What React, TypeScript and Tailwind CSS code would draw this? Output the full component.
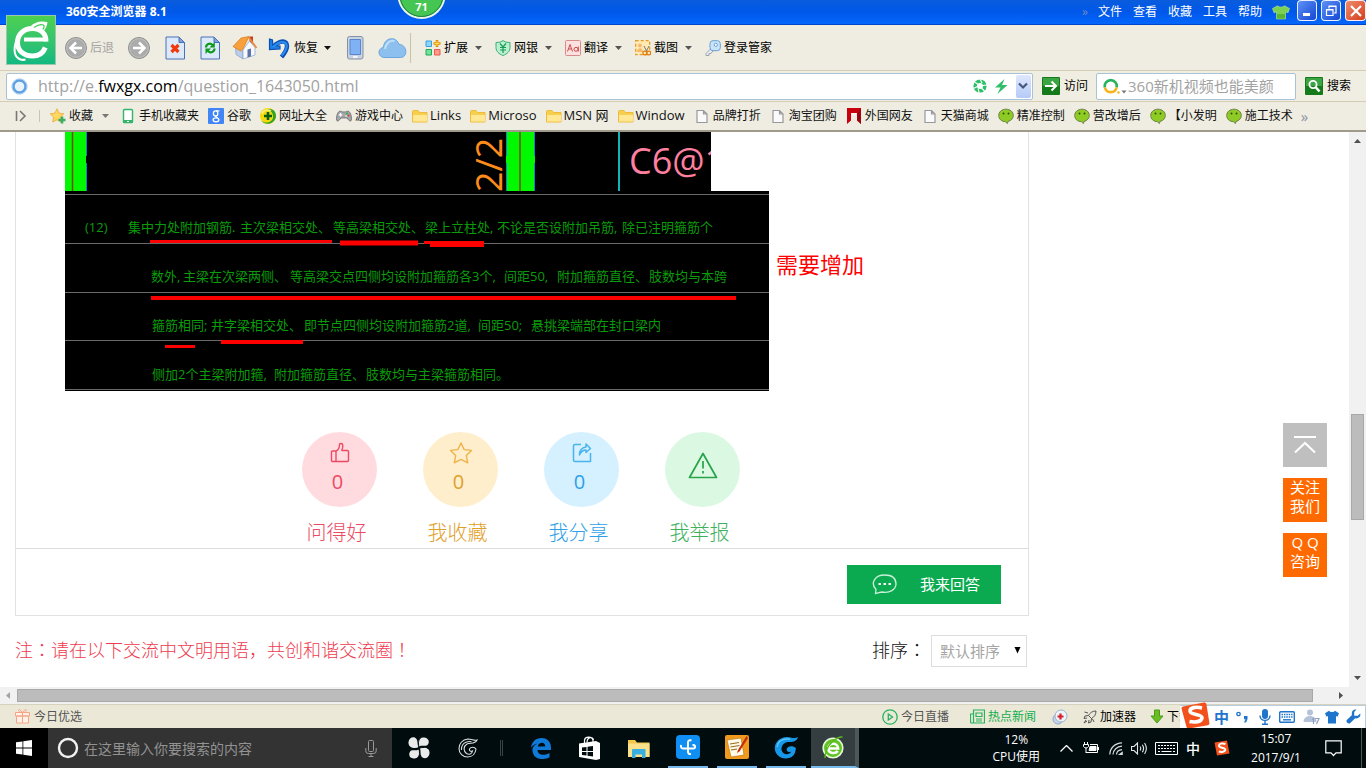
import React from 'react';

type IconName =
  | 'phone'
  | 'google'
  | 'plus'
  | 'pad'
  | 'folder'
  | 'page'
  | 'ribbon'
  | 'wechat';

const bookmarks: { title: string; icon: IconName }[] = [
  { title: '手机收藏夹', icon: 'phone' },
  { title: '谷歌', icon: 'google' },
  { title: '网址大全', icon: 'plus' },
  { title: '游戏中心', icon: 'pad' },
  { title: 'Links', icon: 'folder' },
  { title: 'Microso', icon: 'folder' },
  { title: 'MSN 网', icon: 'folder' },
  { title: 'Window', icon: 'folder' },
  { title: '品牌打折', icon: 'page' },
  { title: '淘宝团购', icon: 'page' },
  { title: '外国网友', icon: 'ribbon' },
  { title: '天猫商城', icon: 'page' },
  { title: '精准控制', icon: 'wechat' },
  { title: '营改增后', icon: 'wechat' },
  { title: '【小发明', icon: 'wechat' },
  { title: '施工技术', icon: 'wechat' },
];

function BookmarkIcon({ name }: { name: IconName }) {
  return (
    <svg className="size-4 shrink-0" viewBox="0 0 16 16" aria-hidden="true">
      {name === 'phone' && (
        <>
          <rect x="3.5" y="1.5" width="9" height="13" rx="1" fill="#fff" stroke="#35b46b" strokeWidth="1.4" />
          <path d="M3 12h10v3H3z" fill="#35b46b" />
          <path d="M7 13.5h2" stroke="#fff" />
        </>
      )}
      {name === 'google' && (
        <>
          <rect width="16" height="16" rx="1" fill="#4285f4" />
          <ellipse cx="7.6" cy="5.4" rx="2.2" ry="2.5" fill="none" stroke="#fff" strokeWidth="1.3" />
          <ellipse cx="8" cy="11.8" rx="2.9" ry="2" fill="none" stroke="#fff" strokeWidth="1.3" />
          <path d="M8 2.8h3.4M7.2 8l2.4 2" stroke="#fff" strokeWidth="1.2" />
        </>
      )}
      {name === 'plus' && (
        <>
          <circle cx="8" cy="8" r="8" fill="#f6d90d" />
          <path d="M1 12.5C5 16 12 15 13 9.5c.6-4-2-7-6-8C13-.5 16 4 16 8c0 7-10 11-15 4.5z" fill="#2aa52a" />
          <path d="M2 6c1-4 6-5 9-3" fill="none" stroke="#fff27a" strokeWidth="1.5" />
          <path d="M8 4v8M4 8h8" stroke="#0a5f12" strokeWidth="2.6" />
        </>
      )}
      {name === 'pad' && (
        <>
          <path d="M3 3.5c2-1 3 .5 5 .5s3-1.5 5-.5c2 1.2 3 7 2.3 8.8-.6 1.4-2 1-4.3-2.3H5C2.7 13.3 1.3 13.7.7 12.3 0 10.5 1 4.7 3 3.5z" fill="#a3a6a8" stroke="#5c5f61" strokeWidth=".7" />
          <path d="M4.5 5v3.6M2.7 6.8h3.6" stroke="#fff" strokeWidth="1.3" />
          <circle cx="11" cy="5.5" r="1" fill="#2fae3c" />
          <circle cx="12.6" cy="7.4" r="1" fill="#e0392b" />
          <circle cx="10" cy="8" r=".8" fill="#fff" />
        </>
      )}
      {name === 'folder' && (
        <>
          <path d="M.5 14V3.5A1 1 0 0 1 1.5 2.5H6l1.5 2H15V14z" fill="#f7cf4e" stroke="#eebb3a" />
          <path d="M1 7h14v6.5H1z" fill="#ffe793" />
        </>
      )}
      {name === 'page' && (
        <path d="M3 2.5h6.5l3.5 3.5v8.5H3zM9.5 2.5V6H13" fill="#fafafa" stroke="#98989c" strokeWidth="1.2" />
      )}
      {name === 'ribbon' && (
        <>
          <path d="M1 0h14v16l-4-3.5V6.5H5v6L1 16z" fill="#c8000e" />
          <path d="M5 6.5c2 1.5 4 1.5 6 0V5H5z" fill="#f7f7ef" />
          <path d="M11 12V6l4-6v16z" fill="#9c0410" />
        </>
      )}
      {name === 'wechat' && (
        <>
          <path d="M8 1.2c4.2 0 7.3 2.8 7.3 6.2 0 3-2.2 5.3-5.3 6l-.6 2.2-2-1.9C3.4 13.5.7 10.9.7 7.4.7 4 3.8 1.2 8 1.2z" fill="#8fcb25" stroke="#6f7f4a" strokeWidth="1" />
          <circle cx="5.5" cy="5.5" r="1" fill="#2f5203" />
          <circle cx="10.5" cy="5.5" r="1" fill="#2f5203" />
        </>
      )}
    </svg>
  );
}

function Caret({ color = '#555' }: { color?: string }) {
  return (
    <svg className="shrink-0" width="7" height="4" viewBox="0 0 7 4" aria-hidden="true">
      <path d="M0 0h7L3.5 4z" fill={color} />
    </svg>
  );
}

function TitleBar() {
  return (
    <header className="relative flex h-[25px] items-start border-b border-[#0046c8] bg-linear-to-b from-[#0a5cdc] via-[#0058ea] to-[#0466fc] text-white">
      <h1 className="mt-1 ml-[66px] text-[12px] leading-4 font-bold">360安全浏览器 8.1</h1>
      <div className="absolute top-[15px] left-[6px] z-10 size-[50px] border border-[#9bc8a8] bg-linear-to-b from-[#4cd04f] to-[#10b981]">
        <svg className="size-12" viewBox="0 0 48 48" fill="none" stroke="#fff" aria-hidden="true">
          <path d="M17 23.5h22" strokeWidth="4" />
          <path d="M38.8 25.5C39.5 18 34 12.5 25.5 12.5c-8.5 0-15 5.5-15 14s6.5 13.5 15 13.5c5.5 0 10.5-2.5 12.8-8.5" strokeWidth="5" />
          <path d="M23 11c4-4.5 10-6.5 17.5-4.8-.5 3.5-1.5 6-4 9-2-2.2-4.5-3.5-7.5-4z" fill="#fff" stroke="none" />
          <path d="M9.5 24C6.5 33 7 41 13 43.3c2 .8 4 .7 5.5.2" strokeWidth="2.2" />
          <path d="M27 11.5c3.5-2.5 7-3.3 9.5-2.5 1 1.2.5 3-.5 4.5" stroke="#45cb57" strokeWidth="1.2" />
        </svg>
      </div>
      <div className="absolute top-0 left-[398px] z-10 h-[20px] w-[47px]">
        <svg className="absolute inset-0" width="47" height="20" viewBox="0 0 47 20" aria-hidden="true">
          <circle cx="23.5" cy="-5" r="23" fill="#45c552" stroke="#e8f3e6" strokeWidth="2" />
          <circle cx="23.5" cy="-5" r="21.5" fill="none" stroke="#177d45" />
        </svg>
        <span className="relative block text-center text-[11px] leading-[14px] font-bold">71</span>
      </div>
      <nav className="mt-1 ml-auto flex text-[12px] leading-4">
        <span className="mr-2.5 text-[#6f8cc0]">»</span>
        <div className="flex gap-[11px]">
          {['文件', '查看', '收藏', '工具', '帮助'].map((item) => (
            <button key={item} className="whitespace-nowrap">{item}</button>
          ))}
        </div>
      </nav>
      <button className="mt-[5px] ml-[10px]" aria-label="皮肤">
        <svg width="18" height="15" viewBox="0 0 18 15">
          <path d="M5.5.8C7 2.6 11 2.6 12.5.8L17.5 3.5 16 7.8l-2.5-1V14h-9V6.8L2 7.8.5 3.5z" fill="#7bd152" stroke="#b4e89a" strokeWidth=".6" />
          <path d="M5 9h8v4.6H5z" fill="#57b534" />
        </svg>
      </button>
      <div className="ml-[7px] flex gap-[4px]">
        <button className="flex h-[21px] w-[20px] items-center justify-center rounded-sm border border-white/90 bg-linear-to-br from-[#5f90f6] to-[#1545d2]" aria-label="最小化">
          <svg width="14" height="14" viewBox="0 0 14 14"><path d="M3 10.5h7" stroke="#fff" strokeWidth="3" /></svg>
        </button>
        <button className="flex h-[21px] w-[20px] items-center justify-center rounded-sm border border-white/90 bg-linear-to-br from-[#5f90f6] to-[#1545d2]" aria-label="还原">
          <svg width="14" height="14" viewBox="0 0 14 14" fill="none" stroke="#fff">
            <path d="M5 4.5V2.5h7V9h-2M4.5 2h8" strokeWidth="1.2" />
            <path d="M2.5 6h6.5v5.5H2.5zM2 5.5h7.5" strokeWidth="1.2" />
          </svg>
        </button>
        <button className="flex h-[21px] w-[21px] items-center justify-center rounded-sm border border-white/90 bg-linear-to-br from-[#ef8a6c] to-[#d43a12]" aria-label="关闭">
          <svg width="14" height="14" viewBox="0 0 14 14"><path d="M2 2l10 10M12 2L2 12" stroke="#fff" strokeWidth="2.2" /></svg>
        </button>
      </div>
    </header>
  );
}

function ArrowCircle({ flip }: { flip?: boolean }) {
  return (
    <svg width="24" height="24" viewBox="0 0 24 24" className={flip ? 'rotate-180' : ''} aria-hidden="true">
      <circle cx="12" cy="12" r="10.5" fill="#ababab" stroke="#8d8d8d" />
      <circle cx="12" cy="12" r="9.4" fill="none" stroke="#c5c5c5" strokeWidth=".8" />
      <path d="M18 12H7M12 6.5L6.5 12l5.5 5.5" fill="none" stroke="#fff" strokeWidth="2.5" />
    </svg>
  );
}

const tools = [
  {
    title: '扩展',
    icon: (
      <>
        <path d="M1 1h5.5v5.5H1z" fill="#8cd6fb" stroke="#3a9fe0" />
        <path d="M1 9.5h5.5V15H1z" fill="#6fe39a" stroke="#1faa52" />
        <path d="M9.5 9.5H15V15H9.5z" fill="#ff9a8c" stroke="#e85a4a" />
        <path d="M12 0v7M8.5 3.5h7" stroke="#e08a00" strokeWidth="2.6" />
        <path d="M12 1v5M9.5 3.5h5" stroke="#ffdf5a" />
      </>
    ),
  },
  {
    title: '网银',
    icon: (
      <>
        <path d="M8 .6l3 1.6 4 .3v5c0 4-3 6.5-7 8-4-1.5-7-4-7-8v-5l4-.3z" fill="#b9f0cf" stroke="#3fae74" />
        <path d="M5 3.5l3 3.5 3-3.5M8 7v6M5 7.5h6M5 10h6" fill="none" stroke="#1b9a58" strokeWidth="1.2" />
      </>
    ),
  },
  {
    title: '翻译',
    icon: (
      <>
        <rect x=".5" y=".5" width="15" height="15" rx="1" fill="#fde0e0" stroke="#d98b8b" />
        <path d="M2.5 11.5L5 4.5l2.5 7M3.5 9h3" fill="none" stroke="#cc4a4a" />
        <circle cx="11" cy="9.3" r="2" fill="none" stroke="#cc4a4a" />
        <path d="M13.3 6.5v5" stroke="#cc4a4a" />
      </>
    ),
  },
  {
    title: '截图',
    icon: (
      <>
        <rect x=".7" y=".7" width="14" height="14" fill="#ffe9b5" stroke="#e89b22" strokeWidth="1.3" strokeDasharray="3 2" />
        <circle cx="5" cy="5.5" r="2" fill="#f7b96a" />
        <path d="M2 12c0-5 6-5 6 0z" fill="#f7b96a" />
        <path d="M9 6l3 6M14 6l-3 6" stroke="#777" />
        <circle cx="9.8" cy="13" r="1.9" fill="#ffe9b5" stroke="#e07a10" strokeWidth="1.2" />
        <circle cx="13.8" cy="13" r="1.9" fill="#ffe9b5" stroke="#e07a10" strokeWidth="1.2" />
      </>
    ),
  },
];

function Toolbar() {
  return (
    <div className="flex h-[46px] items-center border-b border-[#d4cdb4] bg-[#efede1] text-[12px] whitespace-nowrap text-black">
      <button className="ml-16 flex items-center gap-0.5 text-[#a5a5a5]">
        <ArrowCircle />
        <span>后退</span>
      </button>
      <button className="ml-[13px]" aria-label="前进">
        <ArrowCircle flip />
      </button>
      <button className="ml-[14px]" aria-label="停止">
        <svg width="21" height="24" viewBox="0 0 21 24">
          <path d="M1 1h13l5.5 5.5V23H1z" fill="#dbe9fb" stroke="#4a70b8" />
          <path d="M14 1v5.5h5.5z" fill="#7ea3dc" stroke="#4a70b8" />
          <path d="M6.5 9l7 7M13.5 9l-7 7" stroke="#f03a0c" strokeWidth="3.2" />
        </svg>
      </button>
      <button className="ml-[14px]" aria-label="刷新">
        <svg width="21" height="24" viewBox="0 0 21 24">
          <path d="M1 1h13l5.5 5.5V23H1z" fill="#dbe9fb" stroke="#4a70b8" />
          <path d="M14 1v5.5h5.5z" fill="#7ea3dc" stroke="#4a70b8" />
          <path d="M6 11.5c0-3.5 4-5 6.5-2.5M14.5 12.5c0 3.5-4 5-6.5 2.5" fill="none" stroke="#0c9a18" strokeWidth="2.2" />
          <path d="M14.8 6v5.5H9.5zM5.5 18v-5.5H11z" fill="#0c9a18" />
        </svg>
      </button>
      <button className="ml-[11px]" aria-label="主页">
        <svg width="26" height="25" viewBox="0 0 26 25">
          <path d="M17.5 1.5h3.5v7h-3.5z" fill="#c8401c" />
          <path d="M3.5 11.5L11 16v8L4 19.5z" fill="#b9cdec" stroke="#7c92c0" strokeWidth=".6" />
          <path d="M11 15l6.5-9 5.5 6.5V20l-12 4z" fill="#f6f9fe" stroke="#8aa0cb" strokeWidth=".7" />
          <path d="M1 11.5L9 3l8-1.5L11 14l-2.5 2z" fill="#f7a03c" stroke="#d8781c" strokeWidth=".7" />
          <path d="M16.5 2l8 11" stroke="#ea8a3c" strokeWidth="1.8" />
          <path d="M15.5 14.5l3.5-1v8l-3.5 1z" fill="#5d74a8" />
        </svg>
      </button>
      <button className="ml-[10px] flex items-center">
        <svg width="22" height="23" viewBox="0 0 22 23" aria-hidden="true">
          <path d="M5 11C12 3.5 19 4 19 10c0 4.5-3 8-5.5 11" fill="none" stroke="#0b4fb3" strokeWidth="4.4" />
          <path d="M1.5 3l3 1 .3 5.5L12 10v3L1.5 13.5z" fill="#1c7fe6" stroke="#0b4fb3" strokeWidth="1.2" />
          <path d="M5 11C12 4.5 18.5 5 18.7 10c0 4-3 7-5 9.5" fill="none" stroke="#2b8cee" strokeWidth="2.2" />
        </svg>
        <span className="mr-[6px] ml-1">恢复</span>
        <Caret color="#111" />
      </button>
      <button className="ml-[16px]" aria-label="手机">
        <svg width="17" height="24" viewBox="0 0 17 24">
          <rect x=".5" y=".5" width="15.5" height="22.5" rx="2" fill="#c8d2e0" stroke="#8592a6" />
          <path d="M3 3.5h10.5v15H3z" fill="#7fb1f4" stroke="#5a87cc" />
          <path d="M6 21h4.5" stroke="#fff" strokeWidth="1.6" />
        </svg>
      </button>
      <button className="ml-[14px]" aria-label="云同步">
        <svg width="29" height="22" viewBox="0 0 29 22">
          <path d="M7 20.5C-1 20.5-.5 11 5.5 10.5 5.5 1 18-2 21 7.5c8-.5 9.5 13 1.5 13z" fill="#8dc0ee" stroke="#6ba5dd" />
          <path d="M7 12c1-6 5-9 9.5-8" fill="none" stroke="#bfdff9" strokeWidth="2" />
        </svg>
      </button>
      <div className="ml-[3px] h-[30px] w-px bg-[#c9c4a6]" />
      <div className="ml-[14px] flex items-center gap-[13px]">
        {tools.map((tool) => (
          <button key={tool.title} className="flex items-center">
            <svg width="16" height="16" viewBox="0 0 16 16" aria-hidden="true">{tool.icon}</svg>
            <span className="mr-[7px] ml-[3px]">{tool.title}</span>
            <Caret />
          </button>
        ))}
        <button className="flex items-center gap-[3px]">
          <svg width="16" height="16" viewBox="0 0 16 16" aria-hidden="true">
            <path d="M6.5 8L1 13.5v2h3v-2h2L8.5 10" fill="#e9eef4" stroke="#9aa3ad" />
            <rect x="5" y=".7" width="10.3" height="10" rx="3" fill="#c8e4fb" stroke="#6d9fd0" />
            <circle cx="10.8" cy="4.8" r="1.6" fill="#fff" stroke="#6d9fd0" />
          </svg>
          <span>登录管家</span>
        </button>
      </div>
    </div>
  );
}

function AddressBar() {
  return (
    <div className="flex h-[31px] items-center border-b border-[#d4cdb4] bg-[#f0eee2] text-[12px] text-black">
      <div className="ml-1.5 flex h-[27px] flex-1 items-center rounded-xs border border-[#a9c3d6] bg-white pl-1 text-[16px] text-[#a2a2a2]">
        <svg width="17" height="17" viewBox="0 0 17 17" className="mr-2.5 shrink-0" aria-hidden="true">
          <circle cx="8.5" cy="8.5" r="6" fill="#e8f3fd" stroke="#5d9fe0" strokeWidth="2.4" />
          <circle cx="8.5" cy="8.5" r="7.6" fill="none" stroke="#93c1ee" />
        </svg>
        <span className="whitespace-nowrap">
          http://e.<span className="text-black">fwxgx.com</span>/question_1643050.html
        </span>
        <input className="h-full min-w-0 flex-1 outline-none" aria-label="地址" />
        <button aria-label="极速模式">
          <svg width="14" height="14" viewBox="0 0 14 14">
            <circle cx="7" cy="7" r="4.8" fill="none" stroke="#2fbf69" strokeWidth="3.6" />
            <path d="M7 0l2 4M14 6l-4.5.5M11.5 12L8.5 9M6 14l-.8-4.5M.5 9.5l4-2M1.5 3L5 5.2" stroke="#fff" strokeWidth="1.1" />
          </svg>
        </button>
        <button className="mx-[8px]" aria-label="加速">
          <svg width="13" height="15" viewBox="0 0 13 15"><path d="M9.5 0L0 8.5h5.5L2.5 15 12.5 6H7z" fill="#2fbf69" /></svg>
        </button>
        <button className="mr-px flex h-[23px] w-[15px] items-center justify-center rounded-xs bg-linear-to-b from-[#dfe8fd] to-[#b4caf7]" aria-label="展开地址">
          <svg width="10" height="8" viewBox="0 0 10 8"><path d="M1 1.5l4 4 4-4" fill="none" stroke="#44577f" strokeWidth="2.2" /></svg>
        </button>
      </div>
      <button className="ml-[9px] flex items-center gap-1 whitespace-nowrap">
        <svg width="18" height="18" viewBox="0 0 18 18" aria-hidden="true">
          <rect width="18" height="18" rx="1" fill="#147a1c" />
          <rect x="1" y="1" width="16" height="8" fill="#3da444" />
          <path d="M3 9h11M9.5 4.5L14 9l-4.5 4.5" fill="none" stroke="#fff" strokeWidth="2" />
        </svg>
        访问
      </button>
      <div className="ml-2 flex h-[27px] w-[200px] items-center rounded-xs border border-[#a9c3d6] bg-white pl-[6px]">
        <svg width="24" height="18" viewBox="0 0 24 18" className="shrink-0" aria-hidden="true">
          <path d="M1.9 10.5A6 6 0 1 1 13.6 10.5" fill="none" stroke="#27b35f" strokeWidth="2.6" />
          <path d="M1.9 10.5A6 6 0 0 0 13.6 10.5" fill="none" stroke="#f6b31c" strokeWidth="2.6" />
          <circle cx="15.5" cy="15.5" r="1.2" fill="#f6b31c" />
          <path d="M18.5 13.5h5l-2.5 3z" fill="#777" />
        </svg>
        <input
          className="ml-px h-full min-w-0 flex-1 text-[15px] outline-none placeholder:text-[#a2a2a2]"
          placeholder="360新机视频也能美颜"
          aria-label="搜索内容"
        />
      </div>
      <button className="mr-[15px] ml-[9px] flex items-center gap-1 whitespace-nowrap">
        <svg width="18" height="18" viewBox="0 0 18 18" aria-hidden="true">
          <rect width="18" height="18" rx="1" fill="#147a1c" />
          <rect x="1" y="1" width="16" height="8" fill="#3da444" />
          <circle cx="8" cy="7.5" r="3.6" fill="none" stroke="#fff" strokeWidth="1.8" />
          <path d="M10.5 10l4 4.5" stroke="#fff" strokeWidth="2.6" />
        </svg>
        搜索
      </button>
    </div>
  );
}

function BookmarkBar() {
  return (
    <nav className="flex h-[30px] items-center overflow-hidden border-b-2 border-[#a09a8c] bg-[#efede1] text-[12px] whitespace-nowrap text-[#111]">
      <svg width="12" height="12" viewBox="0 0 12 12" className="ml-[15px] shrink-0" aria-hidden="true">
        <path d="M1.5 1v10M5 1l5 5-5 5" fill="none" stroke="#777" strokeWidth="1.6" />
      </svg>
      <div className="ml-[12px] h-3 w-px bg-[#c9c4b0]" />
      <button className="ml-[10px] flex items-center">
        <svg width="16" height="16" viewBox="0 0 16 16" aria-hidden="true">
          <path d="M7 .8l2 4.4 4.8.6-3.5 3.4.9 4.8L7 11.8l-4.3 2.2.9-4.8L.2 5.8 5 5.2z" fill="#ffd75e" stroke="#e9a934" strokeWidth=".8" />
          <path d="M12 8.5v7M8.5 12h7" stroke="#3fae62" strokeWidth="2.6" />
        </svg>
        <span className="mr-[9px] ml-[3px]">收藏</span>
        <Caret color="#777" />
      </button>
      <div className="ml-[11px] flex gap-[9px]">
        {bookmarks.map((item) => (
          <a
            key={item.title}
            href="#"
            className={item.icon === 'folder' ? 'flex items-center gap-0.5 text-[13px]' : 'flex items-center gap-[3px]'}
          >
            <BookmarkIcon name={item.icon} />
            {item.title}
          </a>
        ))}
      </div>
      <span className="ml-[8px] text-[15px] text-[#8a93a3]">»</span>
    </nav>
  );
}

const notes: { y: number; parts: [number, string][] }[] = [
  {
    y: 41,
    parts: [
      [20, '(12)'],
      [63, '集中力处附加钢筋.'],
      [175, '主次梁相交处、'],
      [268, '等高梁相交处、'],
      [360, '梁上立柱处,'],
      [432, '不论是否设附加吊筋,'],
      [557, '除已注明箍筋个'],
    ],
  },
  {
    y: 90,
    parts: [
      [86, '数外,'],
      [118, '主梁在次梁两侧、'],
      [225, '等高梁交点四侧均设附加箍筋各3个,'],
      [439, '间距50,'],
      [492, '附加箍筋直径、'],
      [584, '肢数均与本跨'],
    ],
  },
  {
    y: 139,
    parts: [
      [87, '箍筋相同;'],
      [146, '井字梁相交处、'],
      [239, '即节点四侧均设附加箍筋2道,'],
      [413, '间距50;'],
      [466, '悬挑梁端部在封口梁内'],
    ],
  },
  {
    y: 188,
    parts: [
      [87, '侧加2个主梁附加箍,'],
      [209, '附加箍筋直径、'],
      [301, '肢数均与主梁箍筋相同。'],
    ],
  },
];

function Drawings() {
  return (
    <div className="min-w-0">
      <svg className="block" width="646" height="59" viewBox="0 0 646 59" role="img" aria-label="梁配筋图">
        <rect width="646" height="59" fill="#000" />
        <path d="M0 0h21v59H0z" fill="#00f800" />
        <path d="M7.5 0v59" stroke="#7a4a00" strokeWidth="1.5" />
        <path d="M21.5 0v24M21.5 31v28" stroke="#0f86c8" />
        <text transform="translate(437 60) rotate(-90)" fill="#ff8c1a" className="text-[36px]">2/2</text>
        <path d="M441 0h29v59h-29z" fill="#00f800" />
        <path d="M441.5 0v24M441.5 31v28M469.5 0v24M469.5 31v28" stroke="#0f86c8" />
        <path d="M455 0v59" stroke="#7a4a00" strokeWidth="1.5" />
        <path d="M554 0v59" stroke="#10b4b8" strokeWidth="2" />
        <text x="564" y="42" fill="#ff7f9f" className="text-[36px]">C6@1</text>
      </svg>
      <svg className="block" width="704" height="200" viewBox="0 0 704 200" role="img" aria-label="附加箍筋说明">
        <rect width="704" height="200" fill="#000" />
        <path d="M0 3.5h704M0 52.5h704M0 101.5h704M0 149.5h704M0 198.5h704" stroke="#6a6a6a" />
        {notes.map((line) =>
          line.parts.map(([x, text]) => (
            <text key={`${line.y}-${x}`} x={x} y={line.y} fill="#0a9c0a" className="text-[13px]">
              {text}
            </text>
          ))
        )}
        <path d="M85 50.5h182M359 51.5h60M100 155.5h30" stroke="#f00" strokeWidth="3" />
        <path d="M275 52h78M365 53.5h54" stroke="#f00" strokeWidth="5" />
        <path d="M86 107h585M156 151h82" stroke="#f00" strokeWidth="4" />
      </svg>
    </div>
  );
}

function Actions() {
  return (
    <div className="mt-[41px] ml-[286px] flex gap-[46px] whitespace-nowrap">
      <button className="w-[75px] text-[#ec4a62]">
        <span className="flex h-[75px] flex-col items-center rounded-full bg-[#ffdbe0] pt-[10px]">
          <svg width="20" height="22" viewBox="0 0 20 22" fill="none" stroke="currentColor" strokeWidth="1.4" strokeLinejoin="round" aria-hidden="true">
            <path d="M2.5 9H6v10.5H2.5a1 1 0 0 1-1-1V10a1 1 0 0 1 1-1zM6 9c3-1 3.5-4 3.5-6.5.2-1.5 3.3-1.5 3.3 1 0 1.5-.2 3.5-1 5h5.7a1 1 0 0 1 1 1.2v8.8a1 1 0 0 1-1 1H6" />
          </svg>
          <span className="mr-1 text-[20px] leading-9">0</span>
        </span>
        <span className="mt-[11px] mr-1.5 block text-[20px] leading-[30px] font-light">问得好</span>
      </button>
      <button className="w-[75px] text-[#e0a02a]">
        <span className="flex h-[75px] flex-col items-center rounded-full bg-[#ffeecb] pt-[10px]">
          <svg width="24" height="22" viewBox="0 0 24 22" fill="none" stroke="#eeb34a" strokeWidth="1.4" strokeLinejoin="round" aria-hidden="true">
            <path d="M12 1l3.2 6.6 7.3.8-5.2 5.2 1.4 7.2L12 17.4l-6.7 3.4 1.4-7.2L1.5 8.4l7.3-.8z" />
          </svg>
          <span className="mr-1 text-[20px] leading-9">0</span>
        </span>
        <span className="mt-[11px] mr-1.5 block text-[20px] leading-[30px] font-light">我收藏</span>
      </button>
      <button className="w-[75px] text-[#2f9fe8]">
        <span className="flex h-[75px] flex-col items-center rounded-full bg-[#d5f0ff] pt-[10px]">
          <svg width="20" height="22" viewBox="0 0 20 22" fill="none" stroke="#4ab4ec" strokeWidth="1.5" strokeLinejoin="round" aria-hidden="true">
            <path d="M9 2.5H3A1.5 1.5 0 0 0 1.5 4v14A1.5 1.5 0 0 0 3 19.5h15.5V11" />
            <path d="M7.5 13c0-5 2.5-7.5 6.5-8V2l4.5 4.5-4.5 4V8c-3 0-5 1.5-6.5 5z" />
          </svg>
          <span className="mr-1 text-[20px] leading-9">0</span>
        </span>
        <span className="mt-[11px] mr-1.5 block text-[20px] leading-[30px] font-light">我分享</span>
      </button>
      <button className="w-[75px] text-[#3db05c]">
        <span className="flex h-[75px] flex-col items-center rounded-full bg-[#dbf8e3] pt-[20px]">
          <svg width="30" height="27" viewBox="0 0 30 27" fill="none" stroke="#27a348" strokeWidth="1.7" strokeLinejoin="round" aria-hidden="true">
            <path d="M15 1.5L28.5 25.5h-27z" />
            <path d="M15 9v7.5M15 19v2.4" />
          </svg>
        </span>
        <span className="mt-[11px] mr-1.5 block text-[20px] leading-[30px] font-light">我举报</span>
      </button>
    </div>
  );
}

function Content() {
  return (
    <main className="min-w-0 flex-1 pl-[15px]">
      <section className="max-w-[1014px] border-x border-b border-[#e2e2e2]">
        <div className="flex pl-[49px]">
          <Drawings />
          <p className="mt-[116px] ml-[7px] text-[22px] leading-8 whitespace-nowrap text-[#f00]">需要增加</p>
        </div>
        <Actions />
        <div className="flex justify-end border-t border-[#dcdcdc] pt-[16px] pr-[27px] pb-[11px]">
          <button className="flex h-[39px] w-[154px] items-center bg-[#0ba950] pl-[25px] text-[15px] text-white">
            <svg width="25" height="21" viewBox="0 0 25 21" fill="none" stroke="#c9f0d8" strokeWidth="1.3" aria-hidden="true">
              <path d="M3.5 19.5L4 15.5C-2 9 3 1 12.5 1S24 6 24 10c0 5.5-6.5 9.5-14 8-2 .2-4 1.2-6.5 1.5z" />
              <path d="M6.5 10h2.4M11.5 10h2.4M16.5 10h2.4" stroke="#fff" strokeWidth="2.2" />
            </svg>
            <span className="ml-[23px]">我来回答</span>
          </button>
        </div>
      </section>
      <div className="flex max-w-[1012px] items-start justify-between pt-[19px] pb-[20px] text-[18px] leading-7 font-light whitespace-nowrap">
        <p className="text-[#ee3a4e]">
          注<span className="font-['Noto_Sans_CJK_JP',sans-serif]">：</span>请在以下交流中文明用语，共创和谐交流圈
          <span className="font-['Noto_Sans_CJK_JP',sans-serif]">！</span>
        </p>
        <div className="flex">
          <label htmlFor="sort" className="mr-[5px] text-[#111]">
            排序<span className="font-['Noto_Sans_CJK_JP',sans-serif]">：</span>
          </label>
          <div className="relative">
            <select id="sort" className="h-8 w-24 appearance-none border border-[#ddd] bg-white pl-2 text-[15px] leading-6 font-normal text-[#a5a5a5]">
              <option>默认排序</option>
            </select>
            <svg className="pointer-events-none absolute top-[12px] right-[6px]" width="7" height="7" viewBox="0 0 7 7" aria-hidden="true">
              <path d="M.5 0h6l-3 6.5z" fill="#000" />
            </svg>
          </div>
        </div>
      </div>
    </main>
  );
}

function SideButtons() {
  return (
    <aside className="mt-[291px] mr-[22px] flex w-11 shrink-0 flex-col gap-[11px] text-[15px] leading-[19px] text-white">
      <button className="flex h-11 items-center justify-center bg-[#bfbfbf]" aria-label="返回顶部">
        <svg width="24" height="20" viewBox="0 0 24 20" fill="none" stroke="#fff" strokeWidth="2" aria-hidden="true">
          <path d="M1 2h22M2 17.5L12 8l10 9.5" />
        </svg>
      </button>
      <button className="h-11 bg-[#ff6a00] pb-1.5">关注<br />我们</button>
      <button className="h-11 bg-[#ff6a00] pb-1.5">Q Q<br />咨询</button>
    </aside>
  );
}

function StatusBar() {
  return (
    <footer className="flex h-6 items-center border-t border-[#d5d2bd] bg-[#ebe8d7] text-[12px] whitespace-nowrap text-[#555]">
      <button className="ml-[15px] flex items-center gap-1">
        <svg width="15" height="15" viewBox="0 0 15 15" fill="#fff1ea" stroke="#f4a584" aria-hidden="true">
          <path d="M1.5 7h12v7h-12zM.5 3.5h14V7H.5zM7.5 3.5V14M7.5 3.5C3 3.5 3-.5 5 .8zM7.5 3.5c4.5 0 4.5-4 2.5-2.7z" />
        </svg>
        今日优选
      </button>
      <button className="ml-auto flex items-center gap-[3px]">
        <svg width="16" height="16" viewBox="0 0 16 16" fill="none" stroke="#27b35f" strokeWidth="1.3" aria-hidden="true">
          <circle cx="8" cy="8" r="7.2" />
          <path d="M6.3 5v6l4.2-3z" />
        </svg>
        今日直播
      </button>
      <button className="ml-[21px] flex items-center gap-[3px] text-[#0fae4c]">
        <svg width="15" height="15" viewBox="0 0 15 15" fill="none" stroke="#27b35f" strokeWidth="1.2" aria-hidden="true">
          <path d="M3.5 1h11v13h-13a1 1 0 0 1-1-1V5h3zM3.5 5v9M6 4h6v3.5H6zM6 10h6M6 12h6" />
        </svg>
        热点新闻
      </button>
      <button className="ml-4" aria-label="医生">
        <svg width="16" height="16" viewBox="0 0 16 16">
          <circle cx="6" cy="10" r="5" fill="#c4d6ea" stroke="#8fa9c4" />
          <circle cx="9" cy="7" r="6" fill="#edf3fa" stroke="#9db4cc" />
          <path d="M8.5 4.5v6M5.5 7.5h6" stroke="#d3222a" strokeWidth="2.2" />
        </svg>
      </button>
      <button className="ml-[15px] flex items-center gap-[3px] text-black">
        <svg width="14" height="14" viewBox="0 0 14 14" fill="none" stroke="#555" aria-hidden="true">
          <path d="M13 1c-4 0-6 2-7.5 4.5L8.5 8.5C11 7 13 5 13 1zM5.5 5.5L2 6 1 8.5l3-.5M8.5 8.5L8 12l-2.5 1 .5-3M3 10l-2 3 3-2" />
          <path d="M1.5 2L5 3M11 12L9.5 9" />
        </svg>
        加速器
      </button>
      <button className="ml-[14px] flex w-[34px] items-center gap-[3px] overflow-hidden text-black">
        <svg width="14" height="15" viewBox="0 0 14 15" className="shrink-0" aria-hidden="true">
          <path d="M4.5 1h5v6H13l-6 7-6-7h3.5z" fill="#68be22" stroke="#4b9a14" />
        </svg>
        下载
      </button>
      <div className="-ml-1 flex h-6 items-center border-y border-r border-[#b9cde0] bg-white">
        <svg width="30" height="28" viewBox="0 0 30 28" className="-mt-1" aria-label="搜狗输入法">
          <path d="M3 5.5L24 1.5q2-.3 2.4 1.5l3 19q.2 1.8-1.5 2.2L9 27.5q-2 .3-2.5-1.5L1.5 7.5q-.3-1.7 1.5-2z" fill="#f2511b" />
          <path d="M22 7c-6-1.5-12-.5-12 3 0 4.5 12.5 2.5 12 7-.5 4-7 4.5-12.5 3.5" fill="none" stroke="#fff" strokeWidth="3.6" />
        </svg>
        <button className="ml-[4px] text-[15px] leading-5 font-bold text-[#1f74cc]">中</button>
        <svg width="12" height="14" viewBox="0 0 12 14" className="ml-[7px]" aria-hidden="true">
          <circle cx="2.5" cy="4" r="1.7" fill="none" stroke="#1f74cc" strokeWidth="1.3" />
          <path d="M8 6h3.5v3q-.5 3-3 4V11q1-.5 1-1.8H8z" fill="#1f74cc" />
        </svg>
        <svg width="12" height="16" viewBox="0 0 12 16" className="ml-[11px]" aria-hidden="true">
          <rect x="3" width="6" height="10" rx="3" fill="#1f74cc" />
          <path d="M1 6.5c0 6.5 10 6.5 10 0M6 11.5V15M3 15.2h6" fill="none" stroke="#1f74cc" strokeWidth="1.4" />
        </svg>
        <svg width="16" height="12" viewBox="0 0 16 12" className="ml-[8px]" aria-hidden="true">
          <rect x=".7" y=".7" width="14.6" height="10.6" rx="1" fill="none" stroke="#1f74cc" strokeWidth="1.4" />
          <path d="M2.5 3.5h11M2.5 6h11" stroke="#1f74cc" strokeWidth="1.4" strokeDasharray="1.5 .9" />
          <path d="M4 8.8h8" stroke="#1f74cc" strokeWidth="1.4" />
        </svg>
        <svg width="17" height="16" viewBox="0 0 17 16" className="ml-[8px]" aria-hidden="true">
          <circle cx="7" cy="3.5" r="3" fill="#b4c3da" />
          <path d="M.5 13c0-8 13-8 13 0z" fill="#b4c3da" />
          <path d="M9 10.5l1.5-1V15M12 9.5h4L13.5 15" fill="none" stroke="#8fa3c0" strokeWidth="1.2" />
        </svg>
        <svg width="14" height="14" viewBox="0 0 14 14" className="ml-[5px]" aria-hidden="true">
          <path d="M4 .8C5 2.5 9 2.5 10 .8l4 2.4-1.5 3.6L11 6v7.5H3V6l-1.5.8L0 3.2z" fill="#1f74cc" />
        </svg>
        <svg width="15" height="15" viewBox="0 0 15 15" className="mr-[4px] ml-[7px]" aria-hidden="true">
          <path d="M10.5.6L8.2 3v3.8h3.6L14.2 4.5c1 3.5-2 5.5-5 4.7L4 14.3C2.3 15.5-.5 13 .8 11L6 6C5 2.5 7.5 0 10.5.6z" fill="#1f74cc" />
        </svg>
      </div>
    </footer>
  );
}

const runningApps = [
  {
    title: '广联云',
    icon: (
      <>
        <rect width="24" height="24" rx="4" fill="#0f8ff4" />
        <path d="M15.5 5.5q-3.5-1-3.5 2v9q0 3 3 2.5M12 13.5H7q-2.5 0-2-3.5M12 13.5h5q2.5 0 2-2.5-1-1.5-2.5-.5" fill="none" stroke="#fff" strokeWidth="2" />
      </>
    ),
  },
  {
    title: '笔记',
    icon: (
      <>
        <rect width="24" height="24" rx="2" fill="#f09a1d" />
        <path d="M2 5l14-2 3 17-13 2z" fill="#fffbe8" stroke="#b86a0a" strokeWidth=".6" />
        <path d="M5 9l9-1.5M5.5 12l9-1.5M6 15l6-1" stroke="#9a6a1c" strokeWidth="1.2" />
        <path d="M21.5 1L13 15l-1 3 2.5-1.5L23 3z" fill="#c22d0a" />
      </>
    ),
  },
  {
    title: '广联达',
    icon: (
      <>
        <path d="M24 2c-3 2-7 .5-11 0C6 2 1 7 .8 13c0 6 5 10.5 11 10.5 6 0 10-4 10-10.5-3-2.5-7-2.5-9 .5-.8 2.5 1.5 4.5 4.5 3-1.5 3-5.5 3.5-8 1.5C5.5 14.5 8 7.5 14 7c4 0 8.5 0 10-5z" fill="#1797e8" />
        <path d="M3 12C4 6 9 3.5 16 4.2" fill="none" stroke="#5cc4fa" strokeWidth="1.4" />
      </>
    ),
  },
];

function TaskBar() {
  return (
    <footer className="flex h-10 items-stretch bg-[#000c0e] text-[12px] whitespace-nowrap text-white">
      <button className="flex w-12 items-center justify-center bg-black" aria-label="开始">
        <svg width="16" height="16" viewBox="0 0 16 16">
          <path d="M0 2.3l6.5-.9v6.2H0zM7.3 1.3L16 0v7.6H7.3zM0 8.4h6.5v6.2L0 13.7zM7.3 8.4H16V16l-8.7-1.3z" fill="#fff" />
        </svg>
      </button>
      <div className="flex w-[344px] items-center bg-[#333]">
        <svg width="22" height="22" viewBox="0 0 22 22" className="ml-[9px] shrink-0" aria-hidden="true">
          <circle cx="11" cy="11" r="9" fill="none" stroke="#f2f2f2" strokeWidth="2.4" />
        </svg>
        <input
          className="ml-[5px] h-full min-w-0 flex-1 text-[14px] outline-none placeholder:text-[#929292]"
          placeholder="在这里输入你要搜索的内容"
          aria-label="搜索"
        />
        <svg width="12" height="17" viewBox="0 0 12 17" className="mr-[15px]" fill="none" stroke="#999" aria-hidden="true">
          <rect x="3.5" y=".5" width="5" height="11" rx="1" />
          <path d="M.8 8v3q0 2.5 2.5 2.5h5.4q2.5 0 2.5-2.5V8M6 13.5v3M3.5 16.5h5" />
        </svg>
      </div>
      <button className="ml-[3px] flex w-12 items-center justify-center" aria-label="应用中心">
        <svg width="22" height="22" viewBox="0 0 22 22">
          <g fill="#e9eaea">
            <path d="M10.5 10.5C5 12 0 10 .5 5c.5-5 6-6 8-3 1.5 2 .5 5 2 8.5z" />
            <path d="M10.8 9.5C9.5 4 11 0 16 .5c5 .5 6 5 3.5 7.5-2 1.5-5.5 0-8.7 1.5z" />
            <path d="M12 11c5.5-1.5 10 .5 9.5 5.5s-6 6-8 3c-1.5-2-.5-5-1.5-8.5z" />
            <path d="M11 12.5C12.5 18 10.5 22 5.5 21.5S.5 16 2.5 14c2-1.5 5.5 0 8.5-1.5z" />
          </g>
          <path d="M1.5 10c2 3 6 1.5 9.2 1.2M12.5 1.5c-3 2-1.7 6-1.7 9.5M20.5 12c-2-3-6-1.2-9.5-1M9.5 20.5c3-2 1.8-6 1.5-9.5" stroke="#000c0e" fill="none" />
        </svg>
      </button>
      <button className="flex w-[49px] items-center justify-center" aria-label="浏览助手">
        <svg width="20" height="20" viewBox="0 0 20 20" fill="none" stroke="#dcdfdf" strokeWidth="1.1">
          <path d="M19 2c-3 1-5-1-9-1C4 1.5 1 6 1 10.5c0 5 4 8.5 8.5 8.5 5 0 8-3.5 8.5-8-1.5-2-5-2.5-6.5 0-.5 2 1.5 3 3 2-.5 3-3.5 4-6 2.5C5 13 5.5 8 9 6c3-1.5 8 .5 10-4z" />
          <path d="M3.5 12C3 6 8 2.5 13.5 3.7" />
        </svg>
      </button>
      <div className="my-[12px] mr-[12px] ml-[8px] w-[3px] border-x border-[#3a4446]" />
      <button className="ml-[1px] flex w-[49px] items-center justify-center" aria-label="Edge">
        <svg width="20" height="21" viewBox="0 0 20 21">
          <path d="M0 10C.5 4 4.5 0 10.5 0 17 0 20 5 20 9.5V12H6.5c.3 5.5 7.5 6 12 3v4.2C12.5 22.5 3.5 21.5 2 15-.2 9.5 4.5 6 7 5.5 4 6 1 7.5 0 10zM6.8 8.5h7.5C14.3 3.5 7.5 3.8 6.8 8.5z" fill="#0f7ad8" />
        </svg>
      </button>
      <button className="flex w-[49px] items-center justify-center" aria-label="应用商店">
        <svg width="21" height="24" viewBox="0 0 21 24">
          <path d="M5.5 7V4.5c0-4.5 8-4.5 8.5 0V6M8 6.5C8 1 14 0 14.5 4" fill="none" stroke="#fff" strokeWidth="1.2" />
          <path d="M0 7.5L17 5l4 2v16l-4 1-17-3z" fill="#fff" />
          <path d="M3 11.5l4.5-.6V15H3zM8.5 10.7l5.5-.8V15H8.5zM3 16h4.5v3.5L3 19zM8.5 16H14v4.5l-5.5-.8z" fill="#000c0e" />
        </svg>
      </button>
      <button className="flex w-[49px] items-center justify-center" aria-label="文件资源管理器">
        <svg width="22" height="19" viewBox="0 0 22 19">
          <path d="M0 1h7l2 2.5h12.5V18H0z" fill="#f4c64a" />
          <path d="M0 4.5h21.5V18H0z" fill="#fbe08c" />
          <path d="M4 19v-8q0-1 1-1h11.5q1 0 1 1v8H14v-3.5H7.5V19z" fill="#37aee2" />
        </svg>
      </button>
      <div className="ml-[5px] flex gap-[9px]">
        {runningApps.map((app) => (
          <button key={app.title} className="flex w-10 items-center justify-center border-b-2 border-[#76b9ed]" aria-label={app.title}>
            <svg width="24" height="24" viewBox="0 0 24 24">{app.icon}</svg>
          </button>
        ))}
      </div>
      <button className="ml-[5px] flex w-12 items-center justify-center border-r-4 border-b-2 border-r-[#4d5758] border-b-[#76b9ed] bg-[#343e40]" aria-label="360安全浏览器">
        <svg width="22" height="23" viewBox="0 0 22 23">
          <circle cx="11" cy="12" r="9.8" fill="#5fc323" stroke="#e6f7d8" strokeWidth="1.6" />
          <path d="M15.8 15c-2 3-9.3 3-9.5-2.5 0-6 9.5-6.5 9.8 0H6" fill="none" stroke="#fff" strokeWidth="2.6" />
          <path d="M20.5 1c-5-.5-17 7-17.5 21" fill="none" stroke="#58b81e" strokeWidth="1.4" />
        </svg>
      </button>
      <div className="ml-auto flex flex-col justify-center text-center leading-[17px]">
        <span>12%</span>
        <span>CPU使用</span>
      </div>
      <div className="ml-[20px] flex items-center">
        <svg width="13" height="7" viewBox="0 0 13 7" fill="none" stroke="#fff" strokeWidth="1.3" aria-hidden="true"><path d="M.5 6.5l6-6 6 6" /></svg>
        <svg width="16" height="12" viewBox="0 0 16 12" className="ml-[10px]" fill="none" stroke="#fff" aria-hidden="true">
          <path d="M1.5 0v2.5M4.5 0v2.5M.5 2.5h5v2q-1 1.5-2.5 1.5T.5 4.5zM3 6v5M7 2.5h7.5v8H3" />
          <path d="M7 4.5h6v4H6z" fill="#fff" />
          <path d="M15.5 5v3" />
        </svg>
        <svg width="14" height="13" viewBox="0 0 14 13" className="ml-[10px]" fill="none" stroke="#d6dada" strokeWidth="1.2" aria-hidden="true">
          <path d="M.8 12.5C1 6 6 1 13 .8M4 12.5C4.2 8 8 4.5 13 4.2M7.5 12.5C7.7 10 10 8 13 7.7" />
          <path d="M10.5 12.5h2.7V10.5z" fill="#fff" />
        </svg>
        <svg width="16" height="13" viewBox="0 0 16 13" className="ml-[8px]" fill="none" stroke="#e4e7e7" strokeWidth="1.1" aria-hidden="true">
          <path d="M.5 4.5H3L6.5 1v11L3 8.5H.5zM9 4.5q1.5 2 0 4M11.3 2.8q2.5 3.7 0 7.4M13.6 1q3.5 5.5 0 11" />
        </svg>
        <svg width="23" height="13" viewBox="0 0 23 13" className="ml-[8px]" fill="none" stroke="#fff" aria-hidden="true">
          <path d="M.5.5h22v12H.5z" />
          <path d="M3 3.5h17M3 6.5h17" strokeDasharray="2 1" />
          <path d="M3 9.5h2M6.5 9.5h10M18 9.5h2" />
        </svg>
        <span className="ml-[8px] text-[14px] font-medium">中</span>
        <svg width="16" height="16" viewBox="0 0 16 16" className="ml-[14px]" aria-label="搜狗">
          <path d="M.5 2.5L13 .5l2.5 13L3 15.5z" fill="#f2511b" />
          <path d="M11.5 4C8 3 5 3.5 5 5.7c0 2.5 6.5 1.5 6.3 4.2-.3 2-3.8 2.3-6.5 1.7" fill="none" stroke="#fff" strokeWidth="2" />
        </svg>
      </div>
      <div className="ml-5 flex w-[52px] flex-col items-center justify-center leading-[19px]">
        <span>15:07</span>
        <span>2017/9/1</span>
      </div>
      <button className="mr-[19px] ml-[23px]" aria-label="通知">
        <svg width="17" height="17" viewBox="0 0 17 17" fill="none" stroke="#fff" strokeWidth="1.2"><path d="M.8.8h15.4v12H11L8.5 15.5 6 12.8H.8z" /></svg>
      </button>
      <div className="mr-1 w-px bg-[#555]" />
    </footer>
  );
}

export default function App() {
  return (
    <div className="flex min-h-screen flex-col overflow-x-hidden bg-white font-['Open_Sans','Noto_Sans_CJK_SC',sans-serif]">
      <TitleBar />
      <Toolbar />
      <AddressBar />
      <BookmarkBar />
      <div className="flex flex-1">
        <Content />
        <SideButtons />
        <div className="flex w-[17px] flex-col items-center bg-[#f1f1f1] py-[7px]">
          <svg width="7" height="4" viewBox="0 0 7 4" aria-hidden="true"><path d="M3.5 0L7 4H0z" fill="#505050" /></svg>
          <div className="mt-[271px] h-[106px] w-[13px] border border-[#a8a8a8] bg-[#bcbcbc]" />
          <svg className="mt-auto" width="7" height="4" viewBox="0 0 7 4" aria-hidden="true"><path d="M0 0h7L3.5 4z" fill="#505050" /></svg>
        </div>
      </div>
      <div className="flex h-[17px] items-center bg-[#f1f1f1] pl-[6px]">
        <svg width="4" height="7" viewBox="0 0 4 7" aria-hidden="true"><path d="M4 0v7L0 3.5z" fill="#a3a3a3" /></svg>
        <div className="ml-[7px] h-[13px] flex-1 border border-[#a8a8a8] bg-[#bcbcbc]" />
        <svg className="mr-[23px] ml-[26px]" width="4" height="7" viewBox="0 0 4 7" aria-hidden="true"><path d="M0 0v7l4-3.5z" fill="#505050" /></svg>
      </div>
      <StatusBar />
      <TaskBar />
    </div>
  );
}
